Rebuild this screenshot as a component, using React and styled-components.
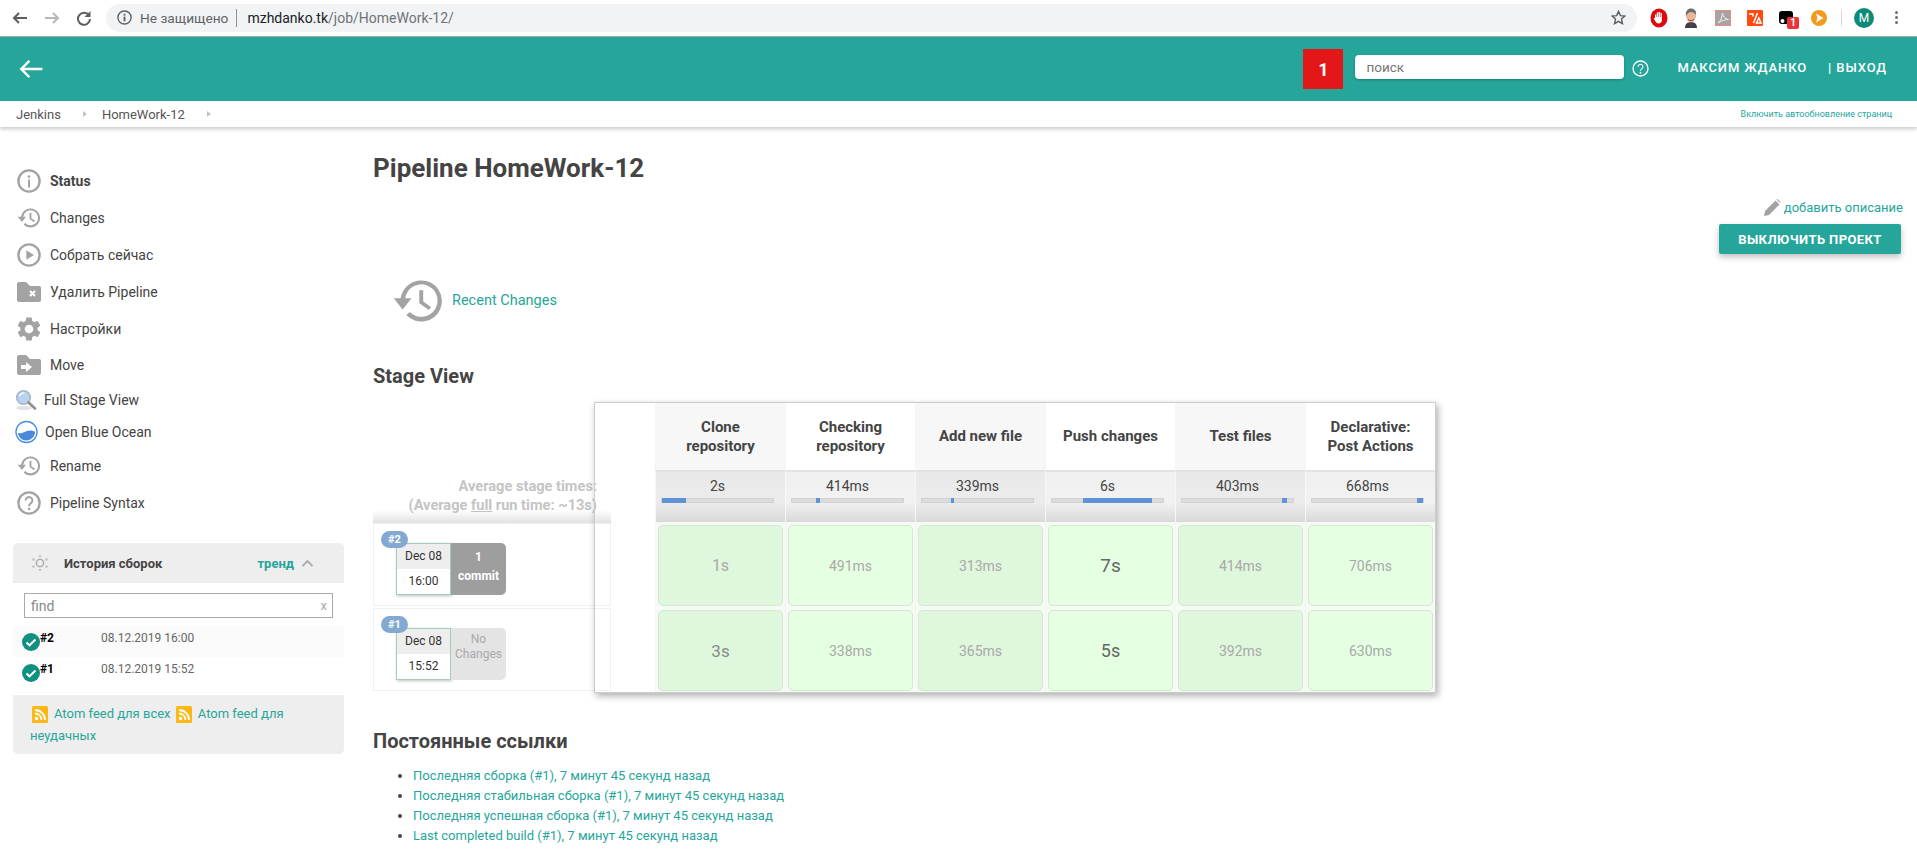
import React from "react";
import styled, { createGlobalStyle } from "styled-components";

const GlobalStyle = createGlobalStyle`
  html, body {
    margin: 0;
    padding: 0;
    background: #fff;
  }
  body {
    font-family: Roboto, "Liberation Sans", sans-serif;
    font-size: 13px;
    color: #444;
  }
  * {
    box-sizing: border-box;
  }
`;

const Page = styled.div`
  width: 1917px;
  height: 861px;
  overflow: hidden;
  display: flex;
  flex-direction: column;
`;

/* browser chrome */
const BrowserBar = styled.div`
  height: 37px;
  flex: none;
  display: flex;
  align-items: center;
  background: #fff;
  border-bottom: 1px solid #a9a9a9;
  padding-bottom: 1px;
  padding-left: 4px;
`;

const NavButton = styled.div`
  width: 32px;
  height: 20px;
  flex: none;
  display: flex;
  align-items: center;
  justify-content: center;
  color: ${(p) => (p.$off ? "#b5b7ba" : "#5a5d61")};
`;

const Omnibox = styled.div`
  margin-left: 6px;
  width: 1531px;
  height: 28px;
  flex: none;
  border-radius: 14px;
  background: #f1f3f4;
  display: flex;
  align-items: center;
  padding-left: 11px;
  padding-right: 11px;
  font-size: 14px;
  color: #5f6368;
`;

const Secure = styled.span`
  margin-left: 8px;
  font-size: 13.7px;
  color: #5f6368;
`;

const OmniDivider = styled.span`
  width: 1px;
  height: 18px;
  background: #8f9296;
  margin: 0 10px 0 8px;
`;

const Host = styled.span`
  color: #202124;
`;

const UrlPath = styled.span`
  color: #6f7377;
`;

const StarIcon = styled.div`
  margin-left: auto;
  display: flex;
  align-items: center;
`;

const Extensions = styled.div`
  display: flex;
  align-items: center;
  margin-left: 6px;
`;

const ExtSlot = styled.div`
  width: 32px;
  height: 20px;
  flex: none;
  display: flex;
  align-items: center;
  justify-content: center;
  position: relative;
`;

const ExtBadge = styled.span`
  position: absolute;
  left: 16px;
  top: 9px;
  width: 12px;
  height: 12px;
  border-radius: 2px;
  background: #ee3338;
  color: #fff;
  font-size: 10px;
  font-weight: 700;
  line-height: 12px;
  text-align: center;
`;

const ExtDivider = styled.span`
  width: 1px;
  height: 16px;
  background: #d6d8da;
  margin: 0 12px 0 6px;
`;

const Avatar = styled.div`
  width: 20px;
  height: 20px;
  border-radius: 50%;
  background: #0f8a78;
  color: #fff;
  font-size: 12px;
  line-height: 20px;
  text-align: center;
`;

const Kebab = styled.div`
  display: flex;
  flex-direction: column;
  gap: 2px;
  margin-left: 21px;
  span {
    width: 3px;
    height: 3px;
    border-radius: 50%;
    background: #6a6d70;
  }
`;

/* jenkins header */
const Header = styled.header`
  height: 64px;
  flex: none;
  background: #26a69a;
  display: flex;
  align-items: center;
  padding-left: 18px;
  color: #fff;
`;

const BuildFlag = styled.div`
  margin-left: auto;
  width: 40px;
  height: 40px;
  background: #e31717;
  color: #fff;
  font-size: 18px;
  font-weight: 700;
  display: flex;
  align-items: center;
  justify-content: center;
`;

const HeaderSearch = styled.input`
  margin-left: 12px;
  margin-bottom: 4px;
  width: 269px;
  height: 24px;
  border: none;
  border-radius: 4px;
  padding: 0 11px;
  font-family: Roboto, sans-serif;
  font-size: 13.5px;
  color: #666;
  background: #fff;
  box-shadow: 0 1px 3px rgba(0, 0, 0, 0.25);
  &::placeholder {
    color: #777;
    opacity: 1;
  }
`;

const HelpIcon = styled.div`
  margin-left: 6px;
  margin-bottom: 2px;
  width: 20px;
  display: flex;
  justify-content: center;
`;

const UserName = styled.a`
  margin-left: 27px;
  margin-bottom: 3px;
  font-size: 13px;
  font-weight: 500;
  letter-spacing: 0.9px;
  white-space: nowrap;
`;

const Logout = styled.a`
  margin-left: 21px;
  margin-right: 30px;
  margin-bottom: 3px;
  font-size: 13px;
  font-weight: 500;
  letter-spacing: 0.9px;
  white-space: nowrap;
`;

const Breadcrumbs = styled.nav`
  height: 26px;
  flex: none;
  display: flex;
  align-items: center;
  padding-left: 16px;
  padding-right: 25px;
  background: #fff;
  box-shadow: 0 2px 4px rgba(0, 0, 0, 0.22);
  font-size: 13px;
  color: #555;
  position: relative;
`;

const Crumb = styled.span`
  white-space: nowrap;
`;

const CrumbArrow = styled.span`
  width: 0;
  height: 0;
  margin: 0 15px 0 22px;
  border-left: 4px solid #c4c4c4;
  border-top: 3px solid transparent;
  border-bottom: 3px solid transparent;
`;

const AutoRefresh = styled.a`
  margin-left: auto;
  font-size: 9px;
  color: #26a69a;
`;

/* page body */
const Main = styled.div`
  flex: 1;
  display: flex;
  min-height: 0;
`;

const Sidebar = styled.aside`
  width: 373px;
  flex: none;
  padding: 36px 29px 0 13px;
`;

const SideRow = styled.a`
  height: ${(p) => (p.$compact ? "32px" : "36.8px")};
  display: flex;
  align-items: center;
  gap: ${(p) => (p.$compact ? "7px" : "9px")};
  padding-left: ${(p) => (p.$compact ? "2px" : "4px")};
  font-size: 14px;
  font-weight: ${(p) => (p.$bold ? 700 : 400)};
  color: #444;
  white-space: nowrap;
`;

const Panel = styled.section`
  margin-top: 22px;
  width: 331px;
  border-radius: 5px;
  background: #eee;
  overflow: hidden;
`;

const PanelHead = styled.div`
  height: 40px;
  display: flex;
  align-items: center;
  padding-left: 19px;
  font-weight: 700;
  font-size: 13px;
  color: #444;
`;

const PanelTitle = styled.span`
  margin-left: 16px;
`;

const TrendLink = styled.a`
  margin-left: auto;
  color: #26a69a;
`;

const Chevron = styled.span`
  margin-left: 8px;
  margin-right: 31px;
  display: flex;
`;

const PanelBody = styled.div`
  background: #fff;
  padding: 10px 0 7px;
`;

const FindBox = styled.div`
  margin: 0 11px 8px;
  height: 25px;
  border: 1px solid #aaa;
  display: flex;
  align-items: center;
  justify-content: space-between;
  padding: 0 5px 0 6px;
  font-size: 14px;
  color: #888;
`;

const Clear = styled.span`
  color: #aaa;
  font-size: 13px;
`;

const BuildRow = styled.div`
  height: 31px;
  display: flex;
  align-items: center;
  padding-left: 9px;
  background: ${(p) => (p.$shade ? "#fafafa" : "#fff")};
`;

const BuildNumber = styled.b`
  width: 61px;
  margin-top: -7px;
  font-size: 12px;
  color: #000;
`;

const BuildDate = styled.span`
  margin-top: -7px;
  font-size: 12px;
  color: #666;
`;

const PanelFooter = styled.div`
  padding: 8px 10px 7px 17px;
  font-size: 13px;
  line-height: 22px;
  color: #26a69a;
  svg {
    vertical-align: -5px;
    margin: 0 6px 0 2px;
  }
`;

const Content = styled.main`
  flex: 1;
  padding: 26px 16px 0 0;
  min-width: 0;
`;

const Title = styled.h1`
  margin: 0;
  font-size: 26px;
  line-height: 30px;
  font-weight: 700;
  color: #444;
`;

const Actions = styled.div`
  margin-top: 15px;
  display: flex;
  flex-direction: column;
  align-items: flex-end;
  gap: 8px;
`;

const AddDescription = styled.a`
  height: 18px;
  display: flex;
  align-items: center;
  gap: 3px;
  margin-right: -2px;
  font-size: 13px;
  color: #26a69a;
`;

const DisableButton = styled.button`
  width: 182px;
  height: 30px;
  border: none;
  border-radius: 2px;
  background: #26a69a;
  color: #fff;
  font-family: Roboto, sans-serif;
  font-size: 13px;
  font-weight: 700;
  letter-spacing: 0.4px;
  box-shadow: 0 3px 6px rgba(0, 0, 0, 0.25);
`;

const RecentChanges = styled.a`
  margin-top: 25px;
  padding-left: 19px;
  height: 43px;
  display: flex;
  align-items: center;
  gap: 8px;
  font-size: 14.5px;
  color: #26a69a;
`;

const SectionTitle = styled.h2`
  margin: ${(p) => p.$top} 0 0;
  font-size: 20px;
  line-height: 24px;
  font-weight: 700;
  color: #444;
`;

const StageWrap = styled.div`
  margin-top: 14px;
  position: relative;
  height: 291px;
`;

const HistoryTable = styled.div`
  width: 238px;
  display: flex;
  flex-direction: column;
`;

const AverageLabel = styled.div`
  height: 121px;
  display: flex;
  flex-direction: column;
  justify-content: flex-end;
  padding: 0 14px 8px 0;
  text-align: right;
  font-size: 14.6px;
  font-weight: 700;
  line-height: 19px;
  color: #c4c4c4;
  background: linear-gradient(to bottom, #fff 0, #fff 108px, #e2e2e2 121px);
  u {
    text-decoration: underline;
  }
`;

const HistoryRow = styled.div`
  height: 83px;
  margin-bottom: 2px;
  border: 1px solid #f0f0f0;
  position: relative;
  padding: 19px 0 0 22px;
  display: flex;
  align-items: flex-start;
`;

const BuildBadge = styled.span`
  position: absolute;
  left: 7px;
  top: 7px;
  width: 27px;
  height: 17px;
  border-radius: 9px;
  background: #83a9d2;
  color: #fff;
  font-size: 11px;
  font-weight: 700;
  line-height: 17px;
  text-align: center;
`;

const DateBox = styled.div`
  width: 55px;
  height: 52px;
  border: 1px solid #a3cdb5;
  background: #fff;
  box-shadow: 1px 1px 3px rgba(0, 0, 0, 0.25);
  display: flex;
  flex-direction: column;
  font-size: 12px;
  color: #333;
  text-align: center;
`;

const DatePart = styled.div`
  flex: 1;
  line-height: 25px;
  background: ${(p) => (p.$shade ? "#eee" : "#fff")};
`;

const CommitBox = styled.div`
  width: 55px;
  height: 52px;
  border-radius: 0 5px 5px 0;
  background: ${(p) => (p.$empty ? "#e4e4e4" : "#9e9e9e")};
  color: ${(p) => (p.$empty ? "#aaa" : "#fff")};
  font-size: 12px;
  font-weight: ${(p) => (p.$empty ? 400 : 700)};
  line-height: ${(p) => (p.$empty ? "15px" : "19px")};
  text-align: center;
  padding-top: ${(p) => (p.$empty ? "4px" : "5px")};
`;

/* first column is see-through: the history table shows under it */
const StageTable = styled.div`
  position: absolute;
  left: 221px;
  top: 0;
  width: 842px;
  height: 291px;
  display: grid;
  grid-template-columns: 60px repeat(6, 130px);
  grid-template-rows: 67px 52px 85px 85px;
  background: transparent;
  border: 1px solid #ccc;
  box-shadow: 2px 3px 7px rgba(0, 0, 0, 0.32);
`;

const Blank = styled.div`
  grid-column: 1;
  grid-row: ${(p) => p.$row};
`;

const StageHead = styled.div`
  display: flex;
  align-items: center;
  justify-content: center;
  padding: 0 14px;
  text-align: center;
  font-size: 15px;
  font-weight: 700;
  line-height: 19px;
  color: #444;
  background: ${(p) => (p.$shade ? "#f7f7f7" : "#fff")};
  border-left: 1px solid #f4f4f4;
`;

const AverageCell = styled.div`
  padding: 4px 11px 0 5px;
  font-size: 14px;
  line-height: 20px;
  color: #444;
  text-align: center;
  border-left: 1px solid #f7f7f7;
  border-top: 2px solid #e2e2e2;
  background: linear-gradient(
    to bottom,
    ${(p) => (p.$shade ? "#e9e9e9" : "#f0f0f0")} 0,
    ${(p) => (p.$shade ? "#ececec" : "#f2f2f2")} 60%,
    #d9d9d9 100%
  );
`;

const BarTrack = styled.div`
  margin-top: 2px;
  height: 5px;
  position: relative;
  background: #dcdcdc;
  border: 1px solid #d2d2d2;
`;

const BarFill = styled.div`
  position: absolute;
  top: -1px;
  bottom: -1px;
  background: #5f93d6;
`;

const CellWrap = styled.div`
  padding: 3px 2px 1px;
  background: #f5fbf4;
  border-left: 1px solid #f2f7f1;
`;

const StageCell = styled.div`
  height: 100%;
  border: 1px solid #d6e6d3;
  border-radius: 5px;
  background: ${(p) => (p.$shade ? "#dff7dc" : "#e5ffe2")};
  display: flex;
  align-items: center;
  justify-content: center;
  font-size: ${(p) => p.$size}px;
  color: ${(p) => p.$color};
`;

const LinkList = styled.ul`
  margin: 13px 0 0;
  padding-left: 40px;
  font-size: 13px;
  line-height: 20px;
  color: #444;
  a {
    color: #26a69a;
  }
`;

const historyPath =
  "M13.5 2.5A9.5 9.5 0 1 1 6.6 18.5L8.2 17.1A7.5 7.5 0 1 0 6.1 10.7H9L4.9 15.9.8 10.7H4A9.6 9.6 0 0 1 13.5 2.5ZM12.6 7h1.8v5.2l3.6 2.6-1 1.4-4.4-3.2z";

const gearPath =
  "M19.14 12.94c.04-.3.06-.61.06-.94 0-.32-.02-.64-.07-.94l2.03-1.58a.49.49 0 0 0 .12-.61l-1.92-3.32a.488.488 0 0 0-.59-.22l-2.39.96c-.5-.38-1.03-.7-1.62-.94l-.36-2.54a.484.484 0 0 0-.48-.41h-3.84c-.24 0-.43.17-.47.41l-.36 2.54c-.59.24-1.13.57-1.62.94l-2.39-.96c-.22-.08-.47 0-.59.22L2.74 8.87c-.12.21-.08.47.12.61l2.03 1.58c-.05.3-.09.63-.09.94s.02.64.07.94l-2.03 1.58a.49.49 0 0 0-.12.61l1.92 3.32c.12.22.37.29.59.22l2.39-.96c.5.38 1.03.7 1.62.94l.36 2.54c.05.24.24.41.48.41h3.84c.24 0 .44-.17.47-.41l.36-2.54c.59-.24 1.13-.56 1.62-.94l2.39.96c.22.08.47 0 .59-.22l1.92-3.32c.12-.22.07-.47-.12-.61l-2.01-1.58zM12 15.6c-1.98 0-3.6-1.62-3.6-3.6s1.62-3.6 3.6-3.6 3.6 1.62 3.6 3.6-1.62 3.6-3.6 3.6z";

const grey = "#a3a3a3";

const HistoryIcon = ({ size = 24 }) => (
  <svg width={size} height={size} viewBox="0 0 24 24">
    <path d={historyPath} fill={grey} />
  </svg>
);

const InfoIcon = () => (
  <svg width="24" height="24" viewBox="0 0 24 24">
    <circle cx="12" cy="12" r="10.6" fill="none" stroke={grey} strokeWidth="2.4" />
    <circle cx="12" cy="7.6" r="1.3" fill={grey} />
    <rect x="11" y="10.5" width="2" height="8" fill={grey} />
  </svg>
);

const PlayIcon = () => (
  <svg width="24" height="24" viewBox="0 0 24 24">
    <circle cx="12" cy="12" r="10.6" fill="none" stroke={grey} strokeWidth="2.4" />
    <path d="M9.4 7.2l7.6 4.8-7.6 4.8z" fill={grey} />
  </svg>
);

const QuestionIcon = ({ size = 24, color = grey, sw = 2.4 }) => (
  <svg width={size} height={size} viewBox="0 0 24 24">
    <circle cx="12" cy="12" r="10.6" fill="none" stroke={color} strokeWidth={sw} />
    <path
      d="M8.6 9.4a3.4 3.4 0 1 1 5.4 2.8c-1.3.9-2 1.5-2 3"
      fill="none"
      stroke={color}
      strokeWidth={sw * 0.85}
    />
    <circle cx="12" cy="18" r="1.3" fill={color} />
  </svg>
);

const FolderIcon = ({ children }) => (
  <svg width="24" height="20" viewBox="0 0 24 20">
    <path
      d="M2 0h7l4 4h9a2 2 0 0 1 2 2v12a2 2 0 0 1-2 2H2a2 2 0 0 1-2-2V2a2 2 0 0 1 2-2z"
      fill={grey}
    />
    {children}
  </svg>
);

const GearIcon = () => (
  <svg width="24" height="24" viewBox="2 2 20 20">
    <path d={gearPath} fill={grey} />
  </svg>
);

const LensIcon = () => (
  <svg width="22" height="22" viewBox="0 0 22 22">
    <ellipse cx="9" cy="19" rx="8" ry="2" fill="#e2e2e2" />
    <circle cx="8.5" cy="8.5" r="6.8" fill="#b9d3ee" stroke="#a9b5c2" strokeWidth="1.6" />
    <path d="M4.5 7a4.5 4.5 0 0 1 5-3" fill="none" stroke="#eef5fc" strokeWidth="1.5" />
    <path d="M13.5 13.5l6.5 6" stroke="#8d8d8d" strokeWidth="2.6" strokeLinecap="round" />
  </svg>
);

const OceanIcon = () => (
  <svg width="23" height="24" viewBox="0 0 24 24">
    <circle cx="12" cy="12" r="11" fill="#fff" stroke="#4a90e2" strokeWidth="1.4" />
    <path
      d="M3 13c3 .8 5-.4 8-1.6 3.4-1.3 6-1.6 10 .2 0 5.2-4.2 9.2-9 9.2-4.6 0-8.4-3.2-9-7.8z"
      fill="#4a8ad9"
    />
  </svg>
);

const SunIcon = () => (
  <svg width="16" height="16" viewBox="0 0 16 16">
    <circle cx="8" cy="8" r="3.6" fill="none" stroke="#a8a8a8" strokeWidth="1.4" />
    <g fill="#b5b5b5">
      <path d="M8 0l1.5 2h-3zM8 16l1.5-2h-3z" />
      <rect x="0.5" y="3.5" width="2" height="2" />
      <rect x="13.5" y="3.5" width="2" height="2" />
      <rect x="0.5" y="10.5" width="2" height="2" />
      <rect x="13.5" y="10.5" width="2" height="2" />
    </g>
  </svg>
);

const CheckBadge = () => (
  <svg width="18" height="18" viewBox="0 0 18 18">
    <circle cx="9" cy="9" r="9" fill="#0f9080" />
    <path d="M4.5 9.5l3 2.8 6-5.8" fill="none" stroke="#fff" strokeWidth="2" />
  </svg>
);

const RssIcon = () => (
  <svg width="16" height="17" viewBox="0 0 16 17">
    <rect width="16" height="17" rx="1.5" fill="#fdb813" />
    <circle cx="4.5" cy="12.5" r="1.7" fill="#fff" />
    <path
      d="M3 7.5a6.5 6.5 0 0 1 6.5 6.5M3 4a10 10 0 0 1 10 10"
      fill="none"
      stroke="#fff"
      strokeWidth="1.8"
    />
  </svg>
);

const PencilIcon = () => (
  <svg width="17" height="17" viewBox="0 0 17 17">
    <path d="M0 17l1-5L11.5 1.5l4 4L5 16z" fill={grey} />
    <path d="M12.5.5l1-.5 3 3-.5 1z" fill={grey} />
  </svg>
);

const ArrowIcon = ({ flip, color = "currentColor", w = 16, sw = 2 }) => (
  <svg width={w} height={w} viewBox="0 0 16 16">
    <path
      d={flip ? "M1 8h13M9 3l5 5-5 5" : "M15 8H2M7 3L2 8l5 5"}
      fill="none"
      stroke={color}
      strokeWidth={sw}
    />
  </svg>
);

const ReloadIcon = () => (
  <svg width="16" height="16" viewBox="0 0 16 16">
    <path d="M13 5.5A6 6 0 1 0 14 9" fill="none" stroke="#5a5d61" strokeWidth="2" />
    <path d="M14.5 1v6h-6z" fill="#5a5d61" />
  </svg>
);

const OmniInfo = () => (
  <svg width="15" height="15" viewBox="0 0 16 16">
    <circle cx="8" cy="8" r="7" fill="none" stroke="#5f6368" strokeWidth="1.5" />
    <rect x="7" y="7" width="2" height="5" fill="#5f6368" />
    <rect x="7" y="4" width="2" height="2" fill="#5f6368" />
  </svg>
);

const Star = () => (
  <svg width="15" height="15" viewBox="0 0 16 16">
    <path
      d="M8 1.5l2 4.5 4.8.5-3.6 3.2 1 4.8L8 12.1l-4.2 2.4 1-4.8L1.2 6.5 6 6z"
      fill="none"
      stroke="#5a5d61"
      strokeWidth="1.5"
    />
  </svg>
);

const AdblockIcon = () => (
  <svg width="18" height="20" viewBox="0 0 18 20">
    <ellipse cx="9" cy="10" rx="8.5" ry="9.5" fill="#e0080f" />
    <path
      d="M5 9.5V6.5h1.3V9h.5V4.5h1.4V9h.5V4h1.4v5h.5V5h1.3v6.8c0 2.5-1.5 3.7-3.3 3.7-1.6 0-2.5-.8-3-2L3.6 10.5l1.1-.5z"
      fill="#fff"
    />
  </svg>
);

const JenkinsIcon = () => (
  <svg width="18" height="20" viewBox="0 0 18 20">
    <path d="M3 20c0-4 2.5-6 6-6s6 2 6 6z" fill="#39414f" />
    <path d="M7 15l2 2 2-2-2 3z" fill="#c8332c" />
    <ellipse cx="9" cy="8" rx="5" ry="6.5" fill="#e8b79a" />
    <path d="M4 8c-1-5 2-7.5 5-7.5S15 3 14 7c-1-2-3-3-5-3S5 6 4 8z" fill="#6b6f72" />
    <path d="M6 11.5c2 1.5 4 1.5 6 0" fill="none" stroke="#8a4a3a" strokeWidth="1" />
  </svg>
);

const PdfIcon = () => (
  <svg width="16" height="16" viewBox="0 0 16 16">
    <rect x="0.5" y="0.5" width="15" height="15" fill="#a8a3a3" stroke="#e58b83" />
    <path
      d="M3 13c3-2 4-6 4.5-10 .5 4 2.5 6 6 6.5-3.5 0-7 1-10.5 3.5z"
      fill="none"
      stroke="#f3f0f0"
      strokeWidth="1"
    />
  </svg>
);

const TagIcon = () => (
  <svg width="16" height="16" viewBox="0 0 16 16">
    <rect width="16" height="16" rx="1" fill="#ff4a12" />
    <path
      d="M2 4h4v2.5M10.5 3L6.5 13M9.5 13H14l-2.2-5z"
      fill="none"
      stroke="#fff"
      strokeWidth="1.5"
    />
  </svg>
);

const PuzzleIcon = () => (
  <svg width="16" height="16" viewBox="0 0 16 16">
    <rect y="1" width="14" height="13" rx="3" fill="#000" />
    <circle cx="3.5" cy="11" r="2" fill="#fff" />
  </svg>
);

const CastIcon = () => (
  <svg width="16" height="16" viewBox="0 0 16 16">
    <circle cx="8" cy="8" r="8" fill="#f09a1f" />
    <path d="M5 3.5L12.5 8 5 12.5l1.5-4.5z" fill="#fff" />
  </svg>
);

const stages = [
  { name: "Clone repository", avg: "2s", left: 0, width: 22 },
  { name: "Checking repository", avg: "414ms", left: 22, width: 3.5 },
  { name: "Add new file", avg: "339ms", left: 26, width: 3 },
  { name: "Push changes", avg: "6s", left: 28, width: 62 },
  { name: "Test files", avg: "403ms", left: 90, width: 5 },
  { name: "Declarative: Post Actions", avg: "668ms", left: 95, width: 5 },
];

const light = "#a9a9a9";

const runs = [
  {
    id: "#2",
    time: "16:00",
    cells: [
      { text: "1s", size: 16, color: light },
      { text: "491ms", size: 14, color: light },
      { text: "313ms", size: 14, color: light },
      { text: "7s", size: 19, color: "#666" },
      { text: "414ms", size: 14, color: light },
      { text: "706ms", size: 14, color: light },
    ],
  },
  {
    id: "#1",
    time: "15:52",
    cells: [
      { text: "3s", size: 17, color: "#8a8a8a" },
      { text: "338ms", size: 14, color: light },
      { text: "365ms", size: 14, color: light },
      { text: "5s", size: 18, color: "#666" },
      { text: "392ms", size: 14, color: light },
      { text: "630ms", size: 14, color: light },
    ],
  },
];

const links = [
  "Последняя сборка (#1), 7 минут 45 секунд назад",
  "Последняя стабильная сборка (#1), 7 минут 45 секунд назад",
  "Последняя успешная сборка (#1), 7 минут 45 секунд назад",
  "Last completed build (#1), 7 минут 45 секунд назад",
];

const App = () => {
  return (
    <Page>
      <GlobalStyle />
      <BrowserBar>
        <NavButton>
          <ArrowIcon />
        </NavButton>
        <NavButton $off>
          <ArrowIcon flip />
        </NavButton>
        <NavButton>
          <ReloadIcon />
        </NavButton>
        <Omnibox>
          <OmniInfo />
          <Secure>Не защищено</Secure>
          <OmniDivider />
          <Host>mzhdanko.tk</Host>
          <UrlPath>/job/HomeWork-12/</UrlPath>
          <StarIcon>
            <Star />
          </StarIcon>
        </Omnibox>
        <Extensions>
          <ExtSlot>
            <AdblockIcon />
          </ExtSlot>
          <ExtSlot>
            <JenkinsIcon />
          </ExtSlot>
          <ExtSlot>
            <PdfIcon />
          </ExtSlot>
          <ExtSlot>
            <TagIcon />
          </ExtSlot>
          <ExtSlot>
            <PuzzleIcon />
            <ExtBadge>1</ExtBadge>
          </ExtSlot>
          <ExtSlot>
            <CastIcon />
          </ExtSlot>
          <ExtDivider />
          <Avatar>M</Avatar>
          <Kebab>
            <span />
            <span />
            <span />
          </Kebab>
        </Extensions>
      </BrowserBar>

      <Header>
        <ArrowIcon w={26} sw={1.5} color="#fff" />
        <BuildFlag>1</BuildFlag>
        <HeaderSearch placeholder="поиск" />
        <HelpIcon>
          <QuestionIcon size={17} color="#fff" sw={1.8} />
        </HelpIcon>
        <UserName>МАКСИМ ЖДАНКО</UserName>
        <Logout>| ВЫХОД</Logout>
      </Header>

      <Breadcrumbs>
        <Crumb>Jenkins</Crumb>
        <CrumbArrow />
        <Crumb>HomeWork-12</Crumb>
        <CrumbArrow />
        <AutoRefresh>Включить автообновление страниц</AutoRefresh>
      </Breadcrumbs>

      <Main>
        <Sidebar>
          <SideRow $bold>
            <InfoIcon />
            Status
          </SideRow>
          <SideRow>
            <HistoryIcon />
            Changes
          </SideRow>
          <SideRow>
            <PlayIcon />
            Собрать сейчас
          </SideRow>
          <SideRow>
            <FolderIcon>
              <path d="M13 9l5 5M18 9l-5 5" stroke="#fff" strokeWidth="2" />
            </FolderIcon>
            Удалить Pipeline
          </SideRow>
          <SideRow>
            <GearIcon />
            Настройки
          </SideRow>
          <SideRow>
            <FolderIcon>
              <path d="M4 10h5V7l6 5-6 5v-3H4z" fill="#fff" />
            </FolderIcon>
            Move
          </SideRow>
          <SideRow $compact>
            <LensIcon />
            Full Stage View
          </SideRow>
          <SideRow $compact>
            <OceanIcon />
            Open Blue Ocean
          </SideRow>
          <SideRow>
            <HistoryIcon />
            Rename
          </SideRow>
          <SideRow>
            <QuestionIcon />
            Pipeline Syntax
          </SideRow>

          <Panel>
            <PanelHead>
              <SunIcon />
              <PanelTitle>История сборок</PanelTitle>
              <TrendLink>тренд</TrendLink>
              <Chevron>
                <svg width="11" height="7" viewBox="0 0 11 7">
                  <path d="M.5 6l5-5 5 5" fill="none" stroke="#aaa" strokeWidth="1.8" />
                </svg>
              </Chevron>
            </PanelHead>
            <PanelBody>
              <FindBox>
                find
                <Clear>x</Clear>
              </FindBox>
              <BuildRow $shade>
                <CheckBadge />
                <BuildNumber>#2</BuildNumber>
                <BuildDate>08.12.2019 16:00</BuildDate>
              </BuildRow>
              <BuildRow>
                <CheckBadge />
                <BuildNumber>#1</BuildNumber>
                <BuildDate>08.12.2019 15:52</BuildDate>
              </BuildRow>
            </PanelBody>
            <PanelFooter>
              <RssIcon />
              Atom feed для всех <RssIcon />
              Atom feed для
              <br />
              неудачных
            </PanelFooter>
          </Panel>
        </Sidebar>

        <Content>
          <Title>Pipeline HomeWork-12</Title>
          <Actions>
            <AddDescription>
              <PencilIcon />
              добавить описание
            </AddDescription>
            <DisableButton>ВЫКЛЮЧИТЬ ПРОЕКТ</DisableButton>
          </Actions>
          <RecentChanges>
            <HistoryIcon size={52} />
            Recent Changes
          </RecentChanges>
          <SectionTitle $top="42px">Stage View</SectionTitle>
          <StageWrap>
            <HistoryTable>
              <AverageLabel>
                <div>Average stage times:</div>
                <div>
                  (Average <u>full</u> run time: ~13s)
                </div>
              </AverageLabel>
              {runs.map((run) => (
                <HistoryRow key={run.id}>
                  <BuildBadge>{run.id}</BuildBadge>
                  <DateBox>
                    <DatePart $shade>Dec 08</DatePart>
                    <DatePart>{run.time}</DatePart>
                  </DateBox>
                  {run.id === "#2" ? (
                    <CommitBox>
                      1
                      <br />
                      commit
                    </CommitBox>
                  ) : (
                    <CommitBox $empty>
                      No
                      <br />
                      Changes
                    </CommitBox>
                  )}
                </HistoryRow>
              ))}
            </HistoryTable>
            <StageTable>
              <Blank $row={1} />
              {stages.map((s, i) => (
                <StageHead key={s.name} $shade={i % 2 === 0}>
                  {s.name}
                </StageHead>
              ))}
              <Blank $row={2} />
              {stages.map((s, i) => (
                <AverageCell key={s.name} $shade={i % 2 === 0}>
                  {s.avg}
                  <BarTrack>
                    <BarFill style={{ left: `${s.left}%`, width: `${s.width}%` }} />
                  </BarTrack>
                </AverageCell>
              ))}
              {runs.map((run, r) => (
                <React.Fragment key={run.id}>
                  <Blank $row={r + 3} />
                  {run.cells.map((c, i) => (
                    <CellWrap key={i}>
                      <StageCell $shade={i % 2 === 0} $size={c.size} $color={c.color}>
                        {c.text}
                      </StageCell>
                    </CellWrap>
                  ))}
                </React.Fragment>
              ))}
            </StageTable>
          </StageWrap>
          <SectionTitle $top="36px">Постоянные ссылки</SectionTitle>
          <LinkList>
            {links.map((l) => (
              <li key={l}>
                <a>{l}</a>
              </li>
            ))}
          </LinkList>
        </Content>
      </Main>
    </Page>
  );
};

export default App;
